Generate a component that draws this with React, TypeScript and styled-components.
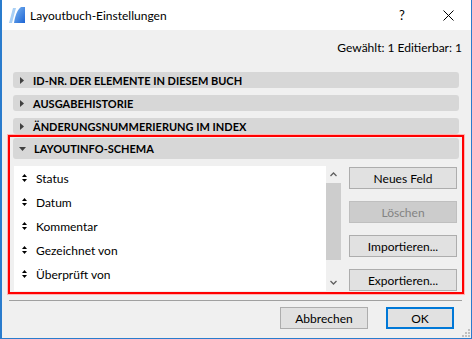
import React from "react";
import styled, { createGlobalStyle } from "styled-components";

const GlobalStyle = createGlobalStyle`
  html, body {
    margin: 0;
    padding: 0;
    background: #ffffff;
  }
  body {
    font-family: Lato, "Noto Sans", sans-serif;
  }
`

const Window = styled.div`
    position: relative;
    box-sizing: border-box;
    width: 472px;
    height: 339px;
    display: flex;
    flex-direction: column;
    border-left: 2px solid #2a7ccd;
    border-right: 1px solid #2a7ccd;
    border-bottom: 1px solid #2a7ccd;
    background: #f0f0f0;
    overflow: hidden;
`
const TitleBar = styled.div`
    height: 30px;
    flex: none;
    display: flex;
    align-items: center;
    background: #ffffff;
    padding-left: 7px;
`
const TitleText = styled.div`
    flex: 1;
    margin-left: 4px;
    font-size: 12px;
    color: #000;
`
const TitleControl = styled.div`
    width: 46px;
    height: 30px;
    display: flex;
    align-items: center;
    justify-content: center;
    font-size: 13px;
    color: #000;
`
const Body = styled.div`
    flex: 1;
    display: flex;
    flex-direction: column;
    padding: 0 7px 0 6px;
`
const InfoRow = styled.div`
    margin-top: 10px;
    height: 16px;
    line-height: 16px;
    text-align: right;
    padding-right: 2px;
    font-size: 12px;
    color: #000;
`
const Sections = styled.div`
    margin-top: 16px;
    display: flex;
    flex-direction: column;
    gap: 7px;
    padding: 0 5px;
`
const SectionHeader = styled.div<{ $open?: boolean }>`
    box-sizing: border-box;
    height: ${p => (p.$open ? 21 : 16)}px;
    display: flex;
    align-items: center;
    gap: ${p => (p.$open ? 8 : 9)}px;
    padding-left: ${p => (p.$open ? 6 : 7)}px;
    background: #d7d7d7;
    border-radius: 3px;
    font-size: 11px;
    font-weight: bold;
    color: #000;
    white-space: nowrap;
`
const Highlight = styled.div`
    margin-top: 1px;
    border: 2px solid #ff0000;
    padding: 1px 3px 1px 3px;
    box-shadow: 0 0 0 1px #ffb4b4;
`
const ContentRow = styled.div`
    display: flex;
    margin-top: 7px;
    padding-left: 1px;
`
const ListBox = styled.div`
    width: 327px;
    height: 125px;
    display: flex;
    background: #ffffff;
`
const Items = styled.div`
    flex: 1;
    display: flex;
    flex-direction: column;
`
const Item = styled.div`
    height: 24px;
    display: flex;
    align-items: center;
    gap: 9px;
    padding-left: 8px;
    font-size: 12px;
    color: #000;
`
const Scrollbar = styled.div`
    width: 15px;
    display: flex;
    flex-direction: column;
    background: #f0f0f0;
`
const ScrollArrow = styled.div`
    height: 17px;
    display: flex;
    align-items: center;
    justify-content: center;
`
const ScrollThumb = styled.div`
    height: 77px;
    background: #cdcdcd;
`
const ScrollTrack = styled.div`
    flex: 1;
`
const ButtonColumn = styled.div`
    width: 108px;
    margin-left: 8px;
    padding-top: 1px;
    display: flex;
    flex-direction: column;
    gap: 12px;
`
const Button = styled.div<{ $disabled?: boolean; $primary?: boolean; $width?: number }>`
    box-sizing: border-box;
    height: 22px;
    width: ${p => (p.$width ? `${p.$width}px` : "auto")};
    display: flex;
    align-items: center;
    justify-content: center;
    font-size: 12px;
    background: ${p => (p.$disabled ? "#cccccc" : "#e1e1e1")};
    color: ${p => (p.$disabled ? "#838383" : "#000")};
    border: ${p => (p.$primary ? "2px solid #0078d7" : p.$disabled ? "1px solid #bfbfbf" : "1px solid #adadad")};
`
const Separator = styled.div`
    margin: 6px 2px 0 1px;
    height: 1px;
    background: #a0a0a0;
`
const Footer = styled.div`
    margin-top: 6px;
    display: flex;
    justify-content: flex-end;
    gap: 18px;
    padding-right: 10px;
`
const Grip = styled.svg`
    position: absolute;
    right: 1px;
    bottom: 1px;
`

const AppIcon = () => (
    <svg width="17" height="16" viewBox="0 0 17 16">
        <defs>
            <linearGradient id="g1" x1="0" y1="0" x2="1" y2="1">
                <stop offset="0" stopColor="#7fb8f2" />
                <stop offset="1" stopColor="#1c64d4" />
            </linearGradient>
        </defs>
        <polygon points="0,16 4,1 7,1 3,16" fill="#a9d0f5" />
        <path d="M5,16 C6,9 8,3 12,0 L16,0 L16,16 Z" fill="url(#g1)" />
    </svg>
)

const Arrow = ({ open }: { open?: boolean }) =>
    open ? (
        <svg width="7" height="4" viewBox="0 0 7 4">
            <polygon points="0,0 7,0 3.5,4" fill="#404040" />
        </svg>
    ) : (
        <svg width="4" height="7" viewBox="0 0 4 7">
            <polygon points="0,0 4,3.5 0,7" fill="#404040" />
        </svg>
    )

const SortIcon = () => (
    <svg width="5" height="8" viewBox="0 0 5 8">
        <polygon points="2.5,0 5,3 0,3" fill="#000" />
        <polygon points="0,5 5,5 2.5,8" fill="#000" />
    </svg>
)

const Chevron = ({ up }: { up?: boolean }) => (
    <svg width="7" height="5" viewBox="0 0 7 5">
        <polyline
            points={up ? "0.5,4 3.5,1 6.5,4" : "0.5,1 3.5,4 6.5,1"}
            fill="none"
            stroke="#606060"
            strokeWidth="1.3"
        />
    </svg>
)

const fields = ["Status", "Datum", "Kommentar", "Gezeichnet von", "Überprüft von"]

const App = () => {
    return (
        <>
            <GlobalStyle />
            <Window>
                <TitleBar>
                    <AppIcon />
                    <TitleText>Layoutbuch-Einstellungen</TitleText>
                    <TitleControl>?</TitleControl>
                    <TitleControl>
                        <svg width="11" height="11" viewBox="0 0 11 11">
                            <path d="M0.5,0.5 L10.5,10.5 M10.5,0.5 L0.5,10.5" stroke="#000" strokeWidth="1" />
                        </svg>
                    </TitleControl>
                </TitleBar>
                <Body>
                    <InfoRow>Gewählt: 1 Editierbar: 1</InfoRow>
                    <Sections>
                        <SectionHeader><Arrow />ID-NR. DER ELEMENTE IN DIESEM BUCH</SectionHeader>
                        <SectionHeader><Arrow />AUSGABEHISTORIE</SectionHeader>
                        <SectionHeader><Arrow />ÄNDERUNGSNUMMERIERUNG IM INDEX</SectionHeader>
                    </Sections>
                    <Highlight>
                        <SectionHeader $open><Arrow open />LAYOUTINFO-SCHEMA</SectionHeader>
                        <ContentRow>
                            <ListBox>
                                <Items>
                                    {fields.map(f => (
                                        <Item key={f}><SortIcon />{f}</Item>
                                    ))}
                                </Items>
                                <Scrollbar>
                                    <ScrollArrow><Chevron up /></ScrollArrow>
                                    <ScrollThumb />
                                    <ScrollTrack />
                                    <ScrollArrow><Chevron /></ScrollArrow>
                                </Scrollbar>
                            </ListBox>
                            <ButtonColumn>
                                <Button>Neues Feld</Button>
                                <Button $disabled>Löschen</Button>
                                <Button>Importieren...</Button>
                                <Button>Exportieren...</Button>
                            </ButtonColumn>
                        </ContentRow>
                    </Highlight>
                    <Separator />
                    <Footer>
                        <Button $width={88}>Abbrechen</Button>
                        <Button $primary $width={68}>OK</Button>
                    </Footer>
                </Body>
                <Grip width="9" height="9" viewBox="0 0 9 9">
                    <rect x="7" y="1" width="2" height="2" fill="#c0c0c0" />
                    <rect x="4" y="4" width="2" height="2" fill="#c0c0c0" />
                    <rect x="7" y="4" width="2" height="2" fill="#c0c0c0" />
                    <rect x="1" y="7" width="2" height="2" fill="#c0c0c0" />
                    <rect x="4" y="7" width="2" height="2" fill="#c0c0c0" />
                    <rect x="7" y="7" width="2" height="2" fill="#c0c0c0" />
                </Grip>
            </Window>
        </>
    )
}

export default App
